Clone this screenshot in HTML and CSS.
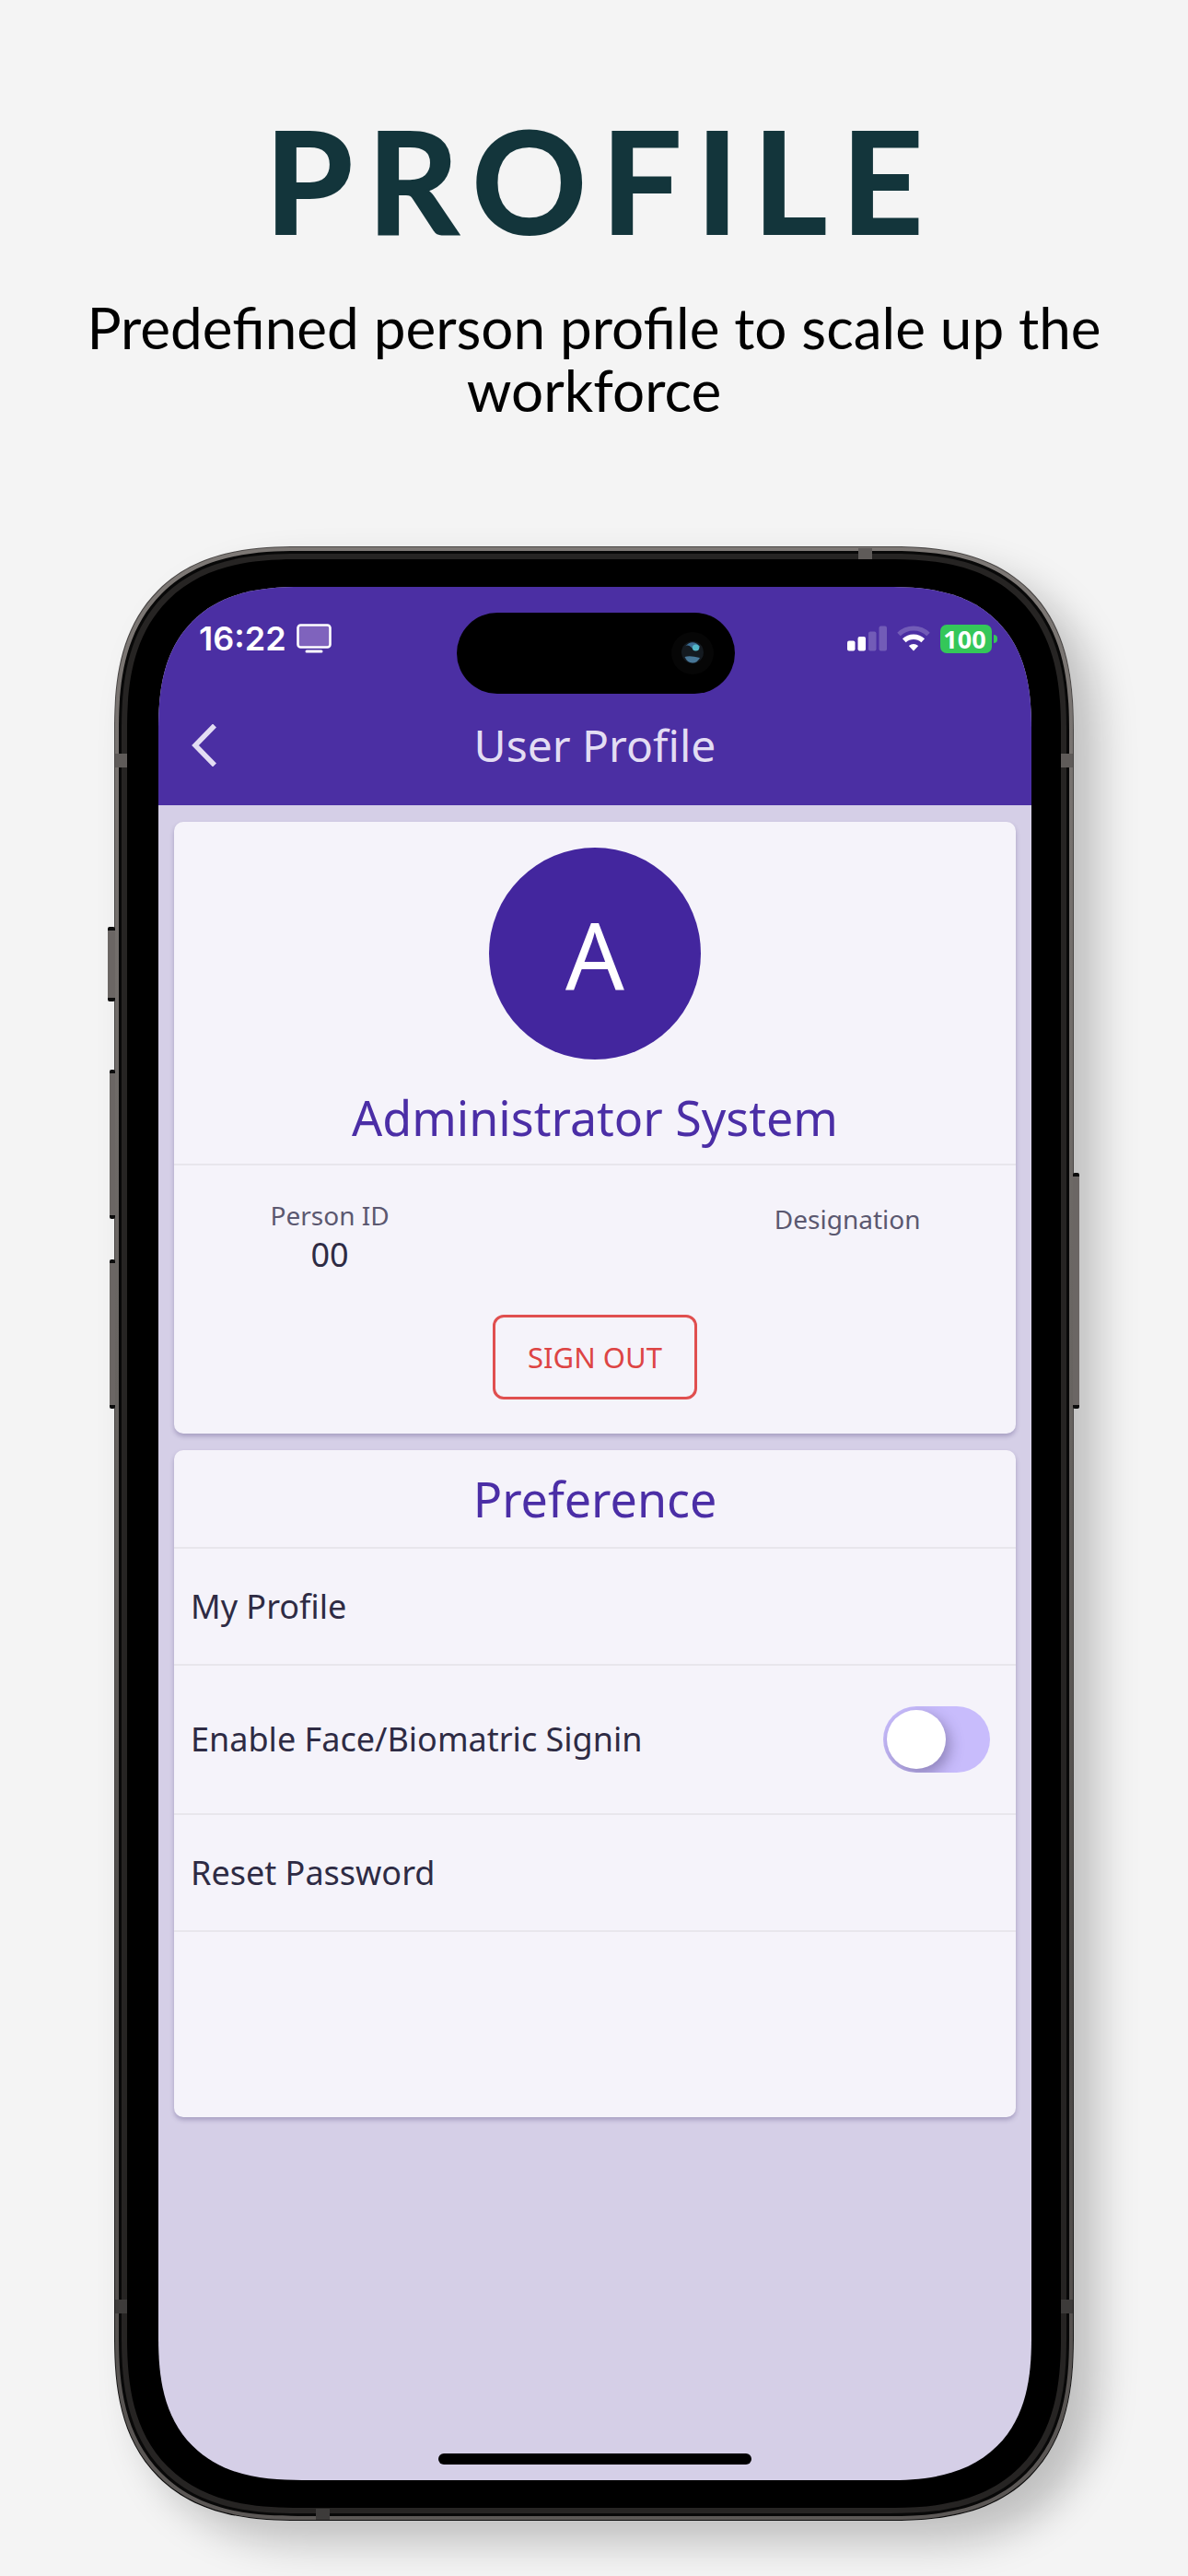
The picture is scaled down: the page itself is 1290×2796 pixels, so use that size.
FILE: index.html
```html
<!DOCTYPE html>
<html lang="en">
<head>
<meta charset="utf-8">
<meta name="viewport" content="width=device-width, initial-scale=1">
<title>User Profile</title>
<link rel="stylesheet" href="styles.css">
</head>
<body>
<header class="intro">
  <h1 class="intro-title">PROFILE</h1>
  <p class="intro-text">Predefined person profile to scale up the workforce</p>
</header>

<div class="phone">
  <span class="key key-action"></span>
  <span class="key key-up"></span>
  <span class="key key-down"></span>
  <span class="key key-power"></span>
  <div class="rim">
    <div class="groove">
      <div class="bezel">
        <div class="screen">
          <header class="app-header">
            <div class="status">
              <div class="status-group">
                <span class="clock">16:22</span>
                <svg class="icon-display" viewBox="0 0 38 32" aria-hidden="true">
                  <rect x="1.5" y="1.5" width="35" height="24" rx="3" fill="#7f63bd" stroke="#fff" stroke-width="2.6"/>
                  <path d="M11 30h16" stroke="#fff" stroke-width="3" stroke-linecap="round"/>
                </svg>
              </div>
              <div class="status-group">
                <svg class="icon-signal" viewBox="0 0 43 28" aria-hidden="true">
                  <rect x="0" y="16.500" width="8.500" height="11" rx="2" fill="#fff"/>
                  <rect x="11.500" y="12" width="8.500" height="15.500" rx="2" fill="#fff"/>
                  <rect x="23" y="6.500" width="8.500" height="21" rx="2" fill="#fff" opacity=".22"/>
                  <rect x="34.500" y="0.500" width="8.500" height="27" rx="2" fill="#fff" opacity=".22"/>
                </svg>
                <svg class="icon-wifi" viewBox="0 0 36 28" aria-hidden="true">
                  <path d="M2 9.500A23 23 0 0 1 34 9.500" fill="none" stroke="#fff" stroke-width="5" opacity=".22"/>
                  <path d="M7.800 16.300A15 15 0 0 1 28.200 16.300" fill="none" stroke="#fff" stroke-width="5.400"/>
                  <path d="M18 27.500L12.800 22Q18 18 23.200 22Z" fill="#fff"/>
                </svg>
                <span class="battery">100</span>
              </div>
            </div>
            <div class="nav">
              <button class="back" type="button" aria-label="Back">
                <svg viewBox="0 0 28 46" aria-hidden="true"><path d="M25 1.500L4 23L25 44.500" fill="none" stroke="currentColor" stroke-width="5.500"/></svg>
              </button>
              <h2 class="nav-title">User Profile</h2>
            </div>
            <div class="island">
              <svg class="camera" viewBox="0 0 46 46" aria-hidden="true">
                <circle cx="23" cy="23" r="23" fill="#060606"/>
                <circle cx="23" cy="22" r="12" fill="#141a20"/>
                <path d="M15 15.500Q23 7 31 15.500L30 19Q24 21 22 17Q18 13 15 15.500Z" fill="#3c6c94"/>
                <circle cx="26.500" cy="17" r="3.600" fill="#52b6c8"/>
                <path d="M14.500 27Q20 25 31 28Q28 33.500 23 33.500Q17 33 14.500 27Z" fill="#477696"/>
              </svg>
            </div>
          </header>

          <main class="content">
            <section class="card profile">
              <div class="avatar">A</div>
              <h3 class="heading person-name">Administrator System</h3>
              <dl class="facts">
                <div class="fact">
                  <dt class="fact-label">Person ID</dt>
                  <dd class="fact-value">00</dd>
                </div>
                <div class="fact fact-empty">
                  <dt class="fact-label">Designation</dt>
                  <dd class="fact-value"></dd>
                </div>
              </dl>
              <button class="sign-out" type="button">SIGN OUT</button>
            </section>

            <section class="card preference">
              <h3 class="heading pref-title">Preference</h3>
              <a class="row" href="#profile">My Profile</a>
              <div class="row row-tall">
                <label for="biometric">Enable Face/Biomatric Signin</label>
                <input class="toggle" type="checkbox" id="biometric">
              </div>
              <a class="row" href="#password">Reset Password</a>
            </section>
          </main>
          <div class="home-bar"></div>
        </div>
      </div>
    </div>
  </div>
  <span class="band band-side band-left-top"></span>
  <span class="band band-side band-right-top"></span>
  <span class="band band-side band-left-bottom"></span>
  <span class="band band-side band-right-bottom"></span>
  <span class="band band-flat band-top"></span>
  <span class="band band-flat band-bottom"></span>
</div>
</body>
</html>
```
FILE: styles.css
```css
* {
  box-sizing: border-box;
}

body {
  margin: 0;
  padding: 120px 124px 60px;
  background: #f4f4f4;
  color: #2e2b44;
  font-family: "Noto Sans", "Open Sans", sans-serif;
}

h1, h2, h3, p, dl, dd {
  margin: 0;
  font-weight: 400;
}

/* Intro above the phone */
.intro {
  margin: 0 -60px;
  padding-bottom: 136px;
  font-family: Lato, sans-serif;
  text-align: center;
}

.intro-title {
  padding-left: 16px;
  color: #13353b;
  font-size: 154px;
  font-weight: 700;
  line-height: 150px;
  letter-spacing: 16px;
  -webkit-text-stroke: 2px #13353b;
}

.intro-text {
  margin-top: 51px;
  color: #000;
  font-size: 62px;
  line-height: 68px;
}

/* Phone body */
.phone {
  position: relative;
  padding: 1px;
  border-radius: 164px;
  background: linear-gradient(#4a4746 60%, #0c0c0c);
  box-shadow: 26px 24px 44px rgba(0, 0, 0, 0.22);
}

.rim {
  padding: 4px;
  border-radius: 163px;
  background: linear-gradient(#7d7875, #66625f 45%, #4a4745 75%, #5c5856);
}

.groove {
  padding: 3px;
  border-radius: 159px;
  background: #080808;
}

.bezel {
  padding: 30px 32px 30px 34px;
  border: 6px solid #262423;
  border-radius: 156px;
  background: #000;
}

.screen {
  display: flex;
  flex-direction: column;
  aspect-ratio: 948 / 2055;
  overflow: hidden;
  border-radius: 126px;
  background: #d5cfe7;
}

@supports (corner-shape: squircle) {
  .phone, .rim, .groove, .bezel, .screen {
    corner-shape: superellipse(1.35);
  }
  .phone { border-radius: 200px; }
  .rim { border-radius: 199px; }
  .groove { border-radius: 195px; }
  .bezel { border-radius: 192px; }
  .screen { border-radius: 156px; }
}

.key {
  position: absolute;
  border: solid #0c0c0c;
  border-width: 4px 0;
  border-radius: 2px;
  background: #6b6664;
}

.key-action { left: -7px; top: 413px; width: 8px; height: 81px; }
.key-up { left: -5px; top: 568px; width: 6px; height: 162px; }
.key-down { left: -5px; top: 774px; width: 6px; height: 162px; }
.key-power { right: -6px; top: 680px; width: 7px; height: 256px; }

.band {
  position: absolute;
  background: #5f5b59;
}

.band-side { width: 13px; height: 15px; }
.band-flat { width: 15px; height: 12px; }
.band-left-top { left: 1px; top: 225px; }
.band-right-top { right: 1px; top: 225px; }
.band-left-bottom { left: 1px; bottom: 225px; background: #3d3b3a; }
.band-right-bottom { right: 1px; bottom: 225px; background: #3d3b3a; }
.band-top { right: 219px; top: 2px; }
.band-bottom { left: 219px; bottom: 1px; background: #3d3b3a; }

/* App header */
.app-header {
  position: relative;
  padding-bottom: 5px;
  background: #4b2fa3;
  color: #fff;
}

.status {
  display: flex;
  align-items: center;
  justify-content: space-between;
  height: 112px;
  padding: 0 43px 0 44px;
}

.status-group {
  display: flex;
  align-items: center;
  gap: 11px;
}

.clock {
  font-family: Inter, sans-serif;
  font-size: 36px;
  font-weight: 600;
}

.icon-display { width: 38px; height: 32px; }
.icon-signal { width: 43px; height: 28px; }
.icon-wifi { width: 36px; height: 28px; }

.battery {
  position: relative;
  width: 56px;
  height: 31px;
  padding-right: 3px;
  border-radius: 7px;
  background: #34c759;
  font-size: 27px;
  font-weight: 700;
  line-height: 31px;
  text-align: center;
}

.battery::after {
  content: "";
  position: absolute;
  right: -6px;
  top: 11px;
  width: 4px;
  height: 9px;
  border-radius: 0 4px 4px 0;
  background: #34c759;
}

.island {
  position: absolute;
  top: 28px;
  left: calc(50% - 150px);
  display: flex;
  align-items: center;
  justify-content: flex-end;
  width: 302px;
  height: 88px;
  padding-right: 23px;
  border-radius: 44px;
  background: #000;
}

.camera { width: 46px; height: 46px; }

.nav {
  display: grid;
  grid-template-columns: 64px 1fr 64px;
  align-items: center;
  height: 120px;
  padding: 0 36px;
  color: #e3ddf3;
}

.back {
  height: 46px;
  padding: 0;
  border: 0;
  background: none;
  color: inherit;
  text-align: left;
}

.back svg { display: block; width: 28px; height: 46px; }

.nav-title {
  font-size: 48px;
  line-height: 64px;
  text-align: center;
}

/* Cards */
.content {
  display: flex;
  flex: 1;
  flex-direction: column;
  gap: 18px;
  padding: 18px 17px;
}

.card {
  border-radius: 10px;
  background: #f5f3fa;
  box-shadow: 0 3px 5px rgba(50, 35, 100, 0.28);
}

.profile {
  display: flex;
  flex-direction: column;
  align-items: center;
  padding: 28px 0 37px;
}

.avatar {
  width: 230px;
  height: 230px;
  border-radius: 50%;
  background: #43269e;
  color: #fff;
  font-size: 100px;
  line-height: 230px;
  text-align: center;
}

.heading {
  border-bottom: 2px solid #e8e6ec;
  color: #4b2ea6;
  font-size: 52px;
  text-align: center;
}

.person-name {
  align-self: stretch;
  margin-top: 12px;
  line-height: 101px;
}

.facts {
  display: flex;
  justify-content: space-between;
  align-self: stretch;
  padding: 36px 0 40px;
  text-align: center;
}

.fact { width: 37%; }

.fact-empty {
  width: 40%;
  padding-top: 4px;
}

.fact-label {
  color: #5b5870;
  font-size: 28px;
  line-height: 36px;
}

.fact-value {
  font-size: 36px;
  line-height: 50px;
}

.sign-out {
  height: 92px;
  padding: 0 35px;
  border: 3px solid #e04f4f;
  border-radius: 12px;
  background: none;
  color: #dd4444;
  font: inherit;
  font-size: 31px;
}

.preference { padding-bottom: 201px; }

.pref-title { line-height: 105px; }

.row {
  display: flex;
  align-items: center;
  justify-content: space-between;
  min-height: 127px;
  padding: 0 28px 0 18px;
  border-bottom: 2px solid #e8e6ec;
  color: inherit;
  font-size: 36px;
  line-height: 48px;
  text-decoration: none;
}

.row-tall { min-height: 162px; }

.toggle {
  display: flex;
  align-items: center;
  width: 116px;
  height: 72px;
  margin: 0;
  padding: 0 4px;
  appearance: none;
  overflow: hidden;
  border-radius: 36px;
  background: #c8bcfc;
}

.toggle::before {
  content: "";
  width: 64px;
  height: 64px;
  border-radius: 50%;
  background: #fff;
  box-shadow: 4px 6px 16px rgba(50, 40, 80, 0.4);
}

.toggle:checked::before { margin-left: auto; }

.home-bar {
  align-self: center;
  width: 340px;
  height: 12px;
  margin-bottom: 17px;
  border-radius: 6px;
  background: #000;
}
```
